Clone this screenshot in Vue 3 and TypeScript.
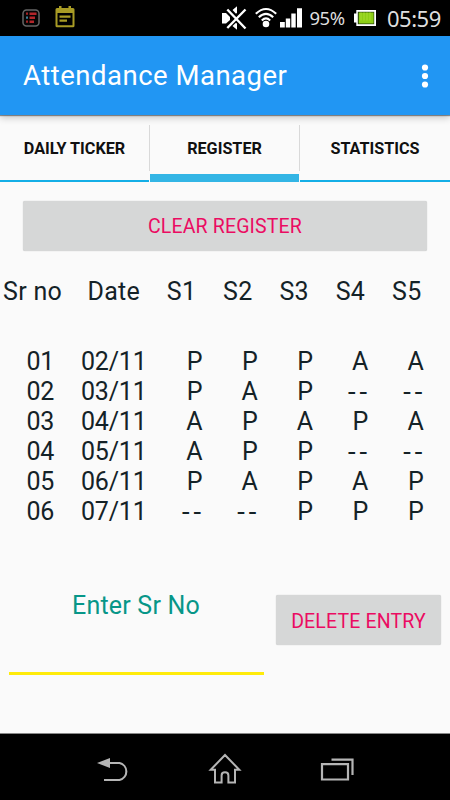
<script setup lang="ts">
interface Entry {
  sr: string
  date: string
  marks: string[]
}

const tabs: string[] = ['DAILY TICKER', 'REGISTER', 'STATISTICS']
const activeTab = 'REGISTER'
const subjects: string[] = ['S1', 'S2', 'S3', 'S4', 'S5']
const entries: Entry[] = [
  { sr: '01', date: '02/11', marks: ['P', 'P', 'P', 'A', 'A'] },
  { sr: '02', date: '03/11', marks: ['P', 'A', 'P', '--', '--'] },
  { sr: '03', date: '04/11', marks: ['A', 'P', 'A', 'P', 'A'] },
  { sr: '04', date: '05/11', marks: ['A', 'P', 'P', '--', '--'] },
  { sr: '05', date: '06/11', marks: ['P', 'A', 'P', 'A', 'P'] },
  { sr: '06', date: '07/11', marks: ['--', '--', 'P', 'P', 'P'] },
]
</script>

<template>
  <div class="screen">
    <header class="status">
      <svg class="ic-list" width="18" height="18" viewBox="0 0 18 18">
        <rect x="1" y="1" width="16" height="16" rx="3.5" fill="#050505" stroke="#666" stroke-width="1.5" />
        <path d="M7.5 4.7h7M7.5 8.7h5.5M7.5 12.7h4.5" stroke="#b3262b" stroke-width="2.4" />
        <path d="M4 4.7h2M4 12.7h2" stroke="#a32427" stroke-width="2.2" />
        <path d="M4 8.7h2" stroke="#3d7f96" stroke-width="2.2" />
      </svg>
      <svg class="ic-note" width="20" height="22" viewBox="0 0 20 22">
        <path fill="#a89b25" fill-rule="evenodd" d="M2 2h2V0h2.500v2h7V0H16v2h2q1.500 0 1.500 1.500v16.300q0 1.500-1.500 1.500H2q-1.500 0-1.500-1.500V3.500Q.5 2 2 2zM2.500 7v12.300h15V7z" />
        <path d="M4.500 10.700h11M4.500 14.700h7.500" stroke="#a89b25" stroke-width="2.300" />
      </svg>
      <svg class="ic-mute" width="25" height="24" viewBox="0 0 25 24">
        <path d="M0 7h4l4 4v3l-4 3.500H0zM10.500 4 15 .3v6.500l-1 1zM10.500 20l4.500 3.700v-6l-1-1z" fill="#fff" />
        <path d="M5.300 3.500 23.500 22.500M23.500 3.500 5.300 22" stroke="#fff" stroke-width="2.400" />
      </svg>
      <svg class="ic-wifi" width="22" height="22" viewBox="0 0 22 22">
        <g fill="none" stroke="#fff" stroke-width="2.100">
          <path d="M.8 6.800Q11-2.800 21.200 6.800" />
          <path d="M3.800 10.200Q11 3.400 18.200 10.200" />
          <path d="M6.800 13.400Q11 9.400 15.200 13.400" />
        </g>
        <circle cx="11" cy="17" r="3.300" fill="#fff" />
      </svg>
      <svg class="ic-signal" width="22" height="20" viewBox="0 0 22 20">
        <path d="M0 14h4.800v5.500H0zM5.800 10.500h4.400v9H5.800zM11.300 5.500h4.400v14h-4.400zM17 .3h5v19.200h-5z" fill="#fff" />
      </svg>
      <span class="percent">95%</span>
      <svg class="ic-battery" width="22" height="16" viewBox="0 0 22 16">
        <path d="M2.300 0H22v16H2.300v-3.500H0v-9h2.300z" fill="#fff" />
        <rect x="3.800" y="1.800" width="16.400" height="12.400" fill="#24400a" />
        <rect x="4.800" y="2.500" width="14.800" height="11" fill="#8cce16" />
        <path d="M7 2.500v8M10 2.500v8M13 2.500v8M16 2.500v8" stroke="#a8dc33" stroke-width="1" />
      </svg>
      <span class="clock">05:59</span>
    </header>

    <div class="appbar">
      <h1>Attendance Manager</h1>
      <svg width="8" height="24" viewBox="0 0 8 24" fill="#fff">
        <circle cx="4" cy="3.500" r="3.100" />
        <circle cx="4" cy="12" r="3.100" />
        <circle cx="4" cy="20.500" r="3.100" />
      </svg>
    </div>

    <nav class="tabs">
      <div v-for="tab in tabs" :key="tab" class="tab" :class="{ active: tab === activeTab }">
        <span>{{ tab }}</span>
      </div>
    </nav>

    <main class="content">
      <button class="btn clear">CLEAR REGISTER</button>
      <div class="head">
        <span>Sr no</span>
        <span>Date</span>
        <span v-for="s in subjects" :key="s">{{ s }}</span>
      </div>
      <div class="rows">
        <div v-for="e in entries" :key="e.sr" class="row">
          <span>{{ e.sr }}</span>
          <span>{{ e.date }}</span>
          <span v-for="(m, i) in e.marks" :key="i" class="mark" :class="{ none: m === '--' }">{{ m }}</span>
        </div>
      </div>
      <div class="form">
        <div class="field">Enter Sr No</div>
        <button class="btn delete">DELETE ENTRY</button>
      </div>
    </main>

    <footer class="navbar">
      <svg width="34" height="26" viewBox="0 0 34 26">
        <path d="M12 7h10.500a8.700 8.700 0 0 1 0 17H7" fill="none" stroke="#b5b5b5" stroke-width="2.100" />
        <path d="M0 7 13 2v10z" fill="#b5b5b5" />
      </svg>
      <svg class="ic-home" width="34" height="32" viewBox="0 0 34 32">
        <path d="M17 2 31.300 16.800H27V29.500h-6.600v-7q0-3.200-3.400-3.200t-3.400 3.200v7H7V16.800H2.700z" fill="none" stroke="#b5b5b5" stroke-width="2" />
      </svg>
      <svg width="34" height="26" viewBox="0 0 34 26">
        <path d="M2 8.200h26V23.500H2zM11.500 3.700H32.500V19" fill="none" stroke="#b5b5b5" stroke-width="2.200" />
      </svg>
    </footer>
  </div>
</template>

<style>
body {
  margin: 0;
}
</style>

<style scoped>
.screen {
  width: 450px;
  height: 800px;
  display: flex;
  flex-direction: column;
  overflow: hidden;
  background: #fafafa;
  font-family: Roboto, "Liberation Sans", sans-serif;
  color: #142227;
}
.status {
  height: 36px;
  flex: none;
  display: flex;
  align-items: flex-start;
  background: #000;
  color: #dedede;
  font-family: "Noto Sans", sans-serif;
  white-space: nowrap;
}
.status svg {
  flex: none;
}
.ic-list { margin: 9px 0 0 22px; }
.ic-note { margin: 6px 0 0 14.500px; }
.ic-mute { margin: 6px 0 0 147px; }
.ic-wifi { margin: 7px 0 0 8.500px; }
.ic-signal { margin: 8px 0 0 3px; }
.percent {
  width: 36px;
  margin: 5px 0 0 7.500px;
  font-size: 18.500px;
  line-height: 26px;
  letter-spacing: -0.500px;
}
.ic-battery { margin: 10px 0 0 8.500px; }
.clock {
  margin: 2px 0 0 11px;
  font-size: 22px;
  line-height: 32px;
  letter-spacing: -0.500px;
}
.appbar {
  height: 79px;
  flex: none;
  box-sizing: border-box;
  position: relative;
  padding: 0 21px 0 23px;
  display: flex;
  align-items: center;
  justify-content: space-between;
  background: #2196f3;
  box-shadow: 0 1px 1px rgba(0, 0, 0, 0.4), 0 3px 7px rgba(0, 0, 0, 0.2);
}
h1 {
  margin: 0;
  font-size: 27.500px;
  font-weight: 400;
  letter-spacing: 0.500px;
  color: #fff;
}
.tabs {
  height: 67px;
  flex: none;
  display: grid;
  grid-template-columns: 149px 149px 150px;
  column-gap: 1px;
  background:
    linear-gradient(#d9d9d9, #d9d9d9) 149px 10px / 1px 46px no-repeat,
    linear-gradient(#d9d9d9, #d9d9d9) 299px 10px / 1px 46px no-repeat;
}
.tab {
  box-sizing: border-box;
  display: flex;
  align-items: center;
  justify-content: center;
  padding-top: 2px;
  border-bottom: 2px solid #14aee6;
  font-size: 16.200px;
  font-weight: 700;
  color: #101010;
}
.tab.active {
  border-bottom: 8px solid #33b5e5;
  padding-top: 8px;
}
.content {
  flex: 1;
}
.btn {
  display: flex;
  align-items: center;
  justify-content: center;
  height: 50px;
  padding: 1px 0 0;
  border: 0;
  border-radius: 2px;
  background: #d6d7d7;
  box-shadow: 0 0 1px #bbb;
  color: #eb0c62;
  font: 400 19.500px Roboto, sans-serif;
  letter-spacing: 0.150px;
  white-space: nowrap;
}
.clear {
  width: 404px;
  margin: 19px 0 0 23px;
}
.head {
  display: grid;
  grid-template-columns: 84.500px 79.300px repeat(5, 56.300px);
  margin: 26px 0 0 3px;
  font-size: 25px;
  line-height: 30px;
  letter-spacing: 0.300px;
}
.rows {
  margin-top: 40px;
}
.row {
  display: grid;
  grid-template-columns: 54.500px 66px repeat(5, 55.300px);
  margin-left: 26.500px;
  font-size: 25px;
  line-height: 30px;
  letter-spacing: -0.200px;
}
.mark {
  text-align: right;
}
.none {
  font-family: "DejaVu Sans", sans-serif;
  letter-spacing: 2.500px;
  margin-right: -2px;
}
.form {
  display: flex;
  margin-top: 58px;
}
.field {
  width: 255px;
  height: 90px;
  margin-left: 9px;
  box-sizing: border-box;
  padding: 6px 1px 0 0;
  border-bottom: 3px solid #ffeb0a;
  text-align: center;
  font-size: 25px;
  line-height: 30px;
  letter-spacing: 0.200px;
  color: #079688;
}
.delete {
  width: 165px;
  height: 50px;
  padding-top: 2px;
  box-sizing: border-box;
  margin: 10px 0 0 12px;
}
.navbar {
  height: 67px;
  flex: none;
  display: flex;
  align-items: center;
  justify-content: space-between;
  box-sizing: border-box;
  padding: 4px 96px 0 97px;
  background: #000;
  border-top: 1px solid #888;
}
.ic-home {
  margin-left: -1px;
}
</style>
